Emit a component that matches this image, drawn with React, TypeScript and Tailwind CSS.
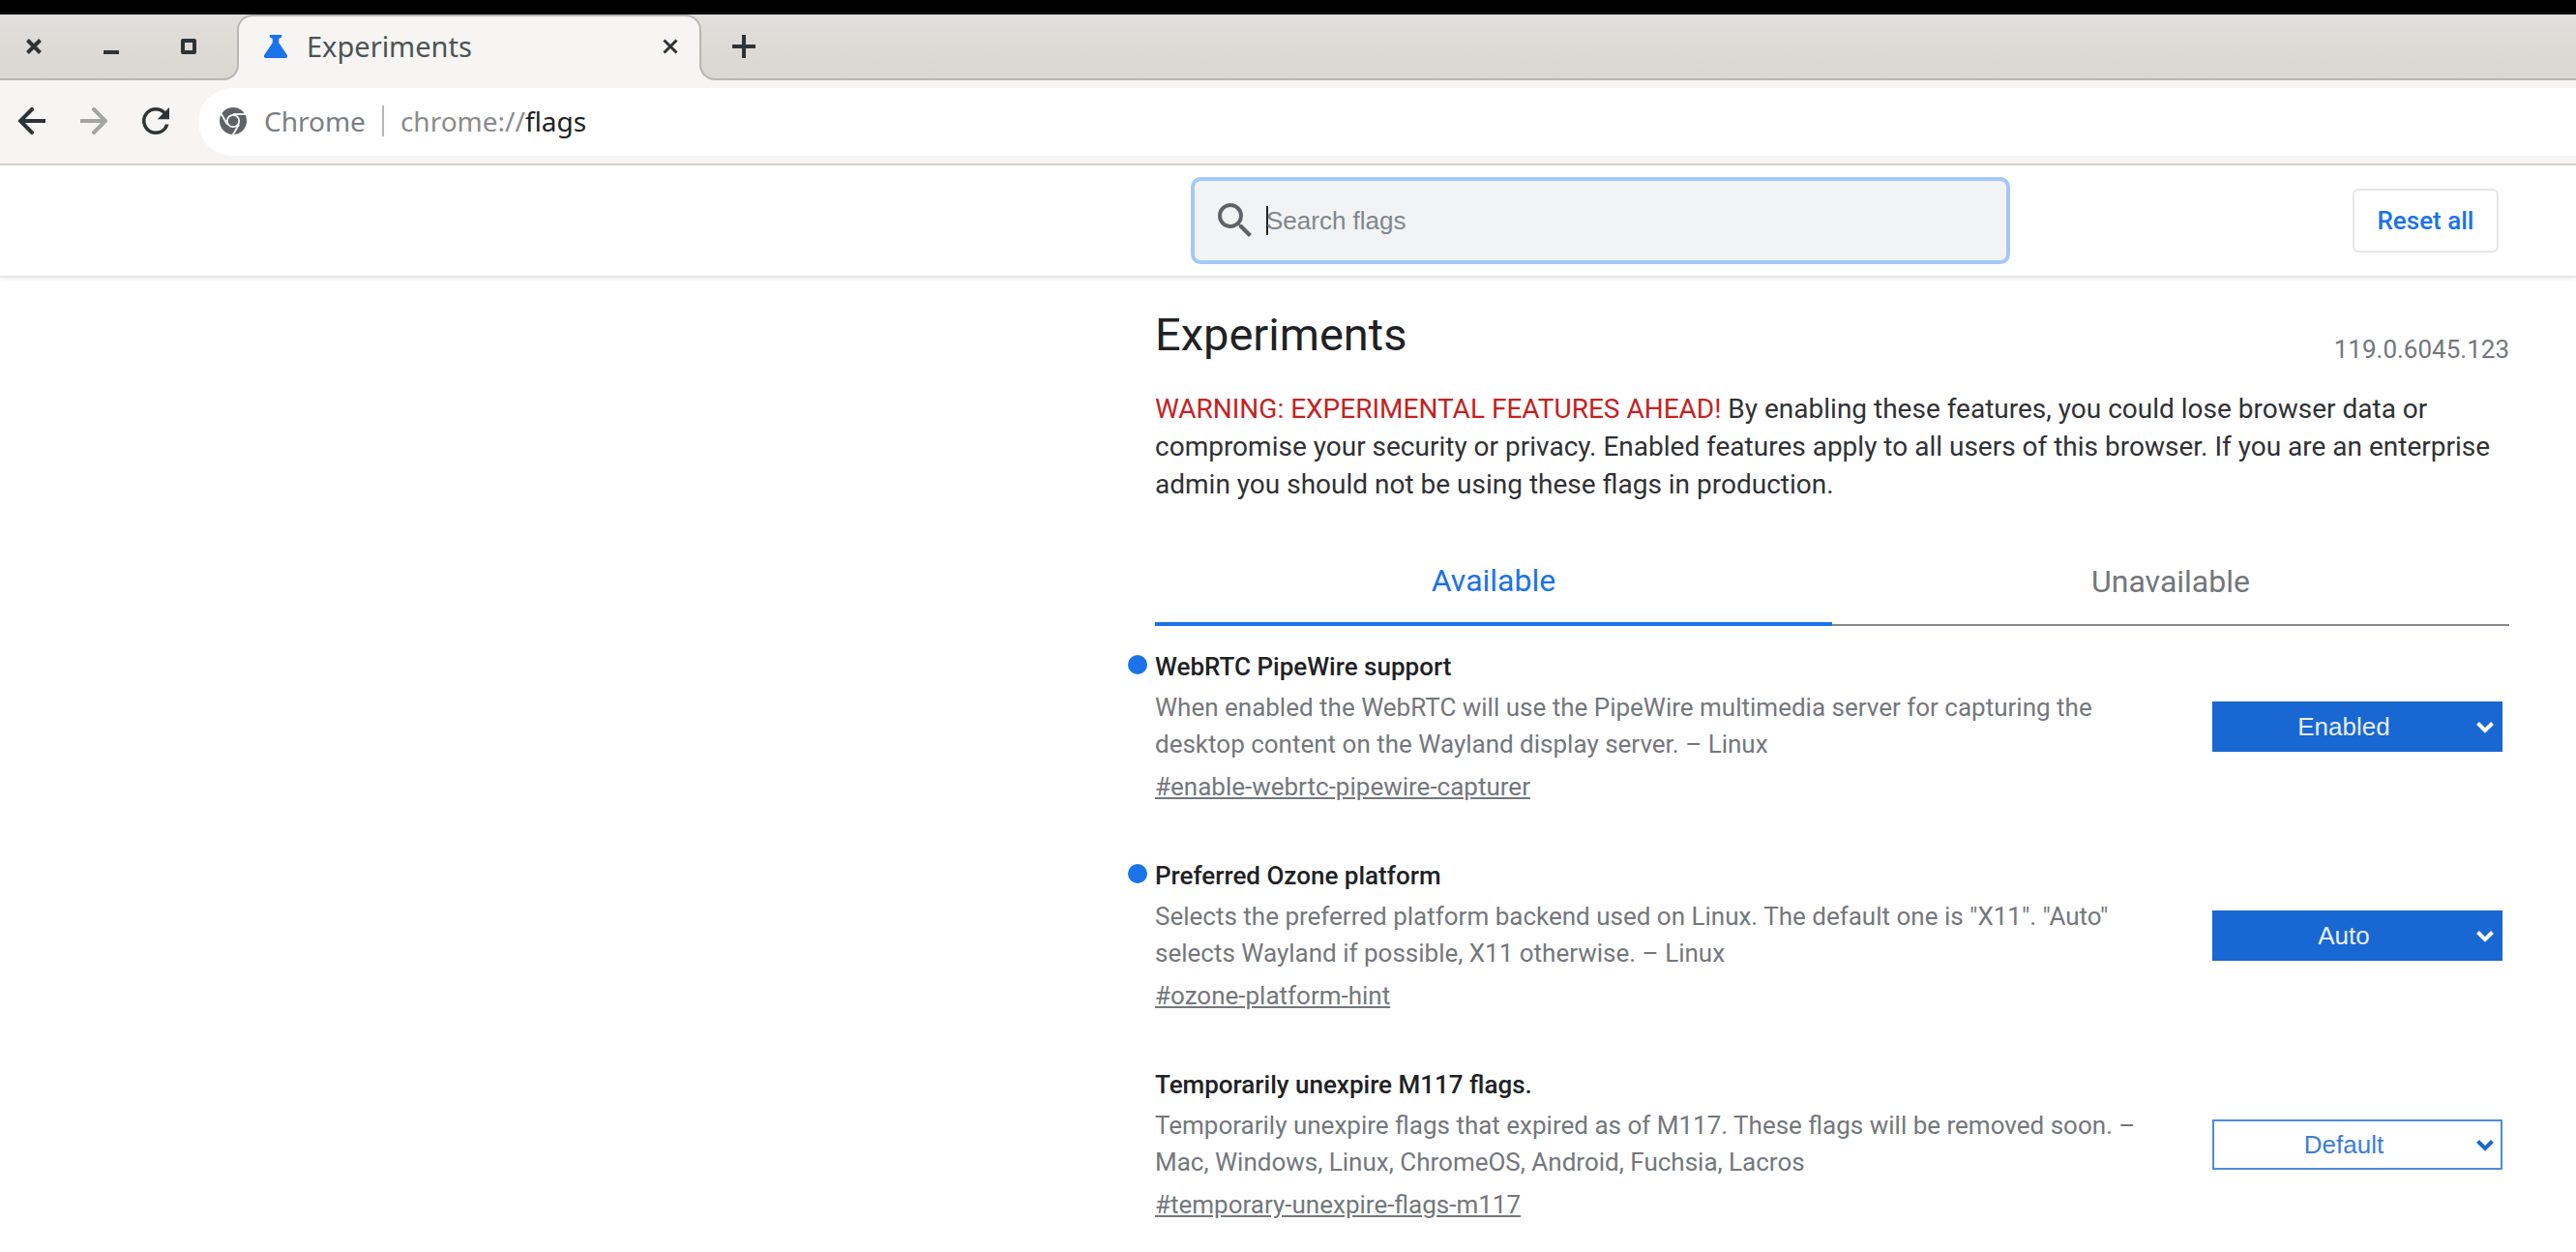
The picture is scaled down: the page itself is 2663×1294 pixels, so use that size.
import type { ReactNode } from "react";
import { MdRefresh, MdSearch } from "react-icons/md";

type Flag = {
  id: string;
  title: string;
  description: string;
  value: string;
  changed: boolean;
};

const flags: Flag[] = [
  {
    id: "enable-webrtc-pipewire-capturer",
    title: "WebRTC PipeWire support",
    description:
      "When enabled the WebRTC will use the PipeWire multimedia server for capturing the desktop content on the Wayland display server. – Linux",
    value: "Enabled",
    changed: true,
  },
  {
    id: "ozone-platform-hint",
    title: "Preferred Ozone platform",
    description:
      'Selects the preferred platform backend used on Linux. The default one is "X11". "Auto" selects Wayland if possible, X11 otherwise. – Linux',
    value: "Auto",
    changed: true,
  },
  {
    id: "temporary-unexpire-flags-m117",
    title: "Temporarily unexpire M117 flags.",
    description:
      "Temporarily unexpire flags that expired as of M117. These flags will be removed soon. – Mac, Windows, Linux, ChromeOS, Android, Fuchsia, Lacros",
    value: "Default",
    changed: false,
  },
];

function CrossIcon({ size, weight }: { size: number; weight: number }) {
  return (
    <svg width={size} height={size} viewBox="0 0 16 16" aria-hidden="true">
      <path d="M1.5 1.5l13 13M14.5 1.5l-13 13" stroke="currentColor" strokeWidth={weight} />
    </svg>
  );
}

function FlaskIcon() {
  return (
    <svg width="24" height="24" viewBox="0 0 24 24" aria-hidden="true">
      <path
        d="M6.5 0h11a.8.8 0 0 1 .8.8v1.4L15.3 4v4.2L23.6 20.6C24.7 22.4 23.8 24 22 24H2C.2 24-.7 22.4.4 20.6L8.7 8.2V4l-3-1.8V.8A.8.8 0 0 1 6.5 0z"
        fill="#1a73e8"
      />
    </svg>
  );
}

function ArrowIcon({ forward }: { forward?: boolean }) {
  return (
    <svg width="28" height="28" viewBox="0 0 28 28" fill="none" stroke="currentColor" strokeWidth="4" aria-hidden="true">
      {forward ? (
        <path d="M0 14h25M14 2l12 12-12 12" strokeLinecap="round" />
      ) : (
        <path d="M28 14H3M14 2L2 14l12 12" strokeLinecap="round" />
      )}
    </svg>
  );
}

function ChromeIcon() {
  return (
    <svg width="28" height="28" viewBox="0 0 24 24" aria-hidden="true">
      <circle cx="12" cy="12" r="12" fill="#5f6368" />
      <circle cx="12" cy="12" r="5.3" fill="#5f6368" stroke="#fff" strokeWidth="1.5" />
      <g stroke="#fff" strokeWidth="1.5">
        <path d="M12 6h12" />
        <path d="M12 6h12" transform="rotate(120 12 12)" />
        <path d="M12 6h12" transform="rotate(240 12 12)" />
      </g>
    </svg>
  );
}

function StripButton({ label, children }: { label: string; children: ReactNode }) {
  return (
    <button type="button" aria-label={label} className="flex size-10 items-center justify-center">
      {children}
    </button>
  );
}

function TabStrip() {
  return (
    <div className="flex h-[68px] bg-[#f6f5f3] text-[#2e3436]">
      <div className="flex w-[247px] items-center gap-10 rounded-br-2xl border-r-2 border-b-2 border-[#b8b5b2] bg-linear-to-b from-[#e2dfdc] to-[#dad6d1] pl-[15px]">
        <StripButton label="Close window">
          <CrossIcon size={16} weight={4} />
        </StripButton>
        <StripButton label="Minimize">
          <span className="mt-3 h-1 w-4 bg-current" />
        </StripButton>
        <StripButton label="Maximize">
          <span className="size-4 rounded-xs border-4 border-current" />
        </StripButton>
      </div>
      <div className="relative -mx-[2px] flex w-[480px] items-center">
        <div className="absolute inset-x-0 top-0 h-8 bg-[#e2dfdc]">
          <div className="h-full rounded-t-2xl border-x-2 border-t-2 border-[#b8b5b2] bg-[#f6f5f3]" />
        </div>
        <div className="relative flex flex-1 items-center pr-3 pb-[2px] pl-7">
          <FlaskIcon />
          <span className="ml-5 flex-1 font-['Noto_Sans','Open_Sans',sans-serif] text-[29px] leading-9 text-[#4b5355]">
            Experiments
          </span>
          <StripButton label="Close tab">
            <CrossIcon size={16} weight={3} />
          </StripButton>
        </div>
      </div>
      <div className="flex flex-1 items-center rounded-bl-2xl border-b-2 border-l-2 border-[#b8b5b2] bg-linear-to-b from-[#e2dfdc] to-[#dad6d1] pl-6">
        <StripButton label="New tab">
          <svg width="24" height="24" viewBox="0 0 24 24" aria-hidden="true">
            <path d="M0 12h24M12 0v24" stroke="currentColor" strokeWidth="4" />
          </svg>
        </StripButton>
      </div>
    </div>
  );
}

function Toolbar() {
  return (
    <div className="flex items-center border-b-2 border-[#d5d0c9] bg-[#f6f5f3] pt-2 pb-2 text-[#2e3436]">
      <div className="flex items-center gap-6 pb-[2px] pl-[13px]">
        <StripButton label="Back">
          <ArrowIcon />
        </StripButton>
        <button type="button" aria-label="Forward" disabled className="flex size-10 items-center justify-center text-[#a3a5a5]">
          <ArrowIcon forward />
        </button>
        <StripButton label="Reload">
          <MdRefresh className="size-[42px] shrink-0" aria-hidden="true" />
        </StripButton>
      </div>
      <div className="ml-6 flex h-[70px] flex-1 items-center rounded-l-full bg-white pb-[2px] pl-[22px] font-['Noto_Sans','Open_Sans',sans-serif] text-[28px] leading-9">
        <ChromeIcon />
        <span className="ml-[18px] text-[#7a7e82]">Chrome</span>
        <span className="mx-[17px] h-8 w-[2px] bg-[#b4b6b8]" />
        <a href="chrome://flags" className="text-[#8a8b8c]">
          chrome://<span className="text-[#202124]">flags</span>
        </a>
      </div>
    </div>
  );
}

function SearchHeader() {
  return (
    <header className="flex items-center justify-end border-b-2 border-[#e6e6e6] bg-white pt-3 pr-20 pb-3 shadow-[0_2px_4px_rgba(0,0,0,0.06)]">
      <label className="relative flex h-[90px] w-full max-w-[847px] items-center rounded-[10px] border-4 border-[#a3c8f8] bg-[#f1f3f4] pl-[18px]">
        <MdSearch className="size-12 shrink-0 text-[#5f6368]" aria-hidden="true" />
        <span className="-mr-[2px] ml-2 h-[30px] w-[2px] shrink-0 bg-[#202124]" />
        <input
          type="text"
          aria-label="Search flags"
          placeholder="Search flags"
          className="h-full min-w-0 flex-1 bg-transparent font-['Liberation_Sans',Arial,sans-serif] text-[26px] text-[#202124] caret-transparent outline-none placeholder:text-[#80868b]"
        />
      </label>
      <button
        type="button"
        className="ml-[354px] h-[66px] w-[151px] shrink-0 rounded-md border-2 border-[#e3e5e9] text-[26px] leading-8 font-medium text-[#1a73e8]"
      >
        Reset all
      </button>
    </header>
  );
}

function FlagRow({ flag }: { flag: Flag }) {
  return (
    <section className="flex h-[216px] items-start pr-[7px]">
      <div className="relative min-w-0 flex-1 pr-10">
        {flag.changed && <span className="absolute top-1 -left-7 size-5 rounded-full bg-[#1a73e8]" />}
        <h3 className="text-[26px] leading-8 font-medium text-[#202124]">{flag.title}</h3>
        <p className="mt-[7px] text-[26px] leading-[38px] text-[#73777c]">{flag.description}</p>
        <a
          href={"#" + flag.id}
          className="mt-[6px] block w-fit text-[26px] leading-[38px] text-[#73777c] underline"
        >
          #{flag.id}
        </a>
      </div>
      <div className="relative mt-[52px] w-[300px] shrink-0">
        <select
          aria-label={flag.title}
          defaultValue={flag.value}
          className={
            flag.changed
              ? "block h-[52px] w-full appearance-none border-2 border-[#1967d2] bg-[#1967d2] pr-7 font-['Liberation_Sans',Arial,sans-serif] text-[26px] text-[#e8f0fe] [text-align-last:center]"
              : "block h-[52px] w-full appearance-none border-2 border-[#4f8be0] bg-white pr-7 font-['Liberation_Sans',Arial,sans-serif] text-[26px] text-[#3b7ddd] [text-align-last:center]"
          }
        >
          <option>{flag.value}</option>
        </select>
        <svg
          className={
            flag.changed
              ? "pointer-events-none absolute top-5 right-[9px] text-white"
              : "pointer-events-none absolute top-5 right-[9px] text-[#1967d2]"
          }
          width="18"
          height="14"
          viewBox="0 0 18 14"
          aria-hidden="true"
        >
          <path d="M1.5 2.5L9 10l7.5-7.5" fill="none" stroke="currentColor" strokeWidth="4" />
        </svg>
      </div>
    </section>
  );
}

export default function App() {
  return (
    <div className="min-h-screen overflow-x-hidden bg-white font-[Roboto,sans-serif]">
      <div className="h-[15px] bg-black" />
      <TabStrip />
      <Toolbar />
      <SearchHeader />
      <main className="mr-[69px] ml-auto max-w-[1400px] pt-7">
        <div className="flex items-end justify-between">
          <h1 className="text-[47px] leading-[62px] text-[#202124]">Experiments</h1>
          <span className="text-[26px] leading-8 text-[#73777c]">119.0.6045.123</span>
        </div>
        <p className="mt-[26px] text-[28px] leading-[39px] text-[#303134]">
          <span className="text-[#c5221f]">WARNING: EXPERIMENTAL FEATURES AHEAD!</span> By enabling these features, you
          could lose browser data or compromise your security or privacy. Enabled features apply to all users of this
          browser. If you are an enterprise admin you should not be using these flags in production.
        </p>
        <div role="tablist" className="mt-[37px] grid grid-cols-2 items-end text-[32px] leading-10">
          <button
            type="button"
            role="tab"
            aria-selected="true"
            className="h-[90px] border-b-4 border-[#1a73e8] text-[#1a73e8]"
          >
            Available
          </button>
          <button
            type="button"
            role="tab"
            aria-selected="false"
            className="h-[90px] border-b-2 border-[#85898d] text-[#73777c]"
          >
            Unavailable
          </button>
        </div>
        <div className="pt-[26px]">
          {flags.map((flag) => (
            <FlagRow key={flag.id} flag={flag} />
          ))}
        </div>
      </main>
    </div>
  );
}
